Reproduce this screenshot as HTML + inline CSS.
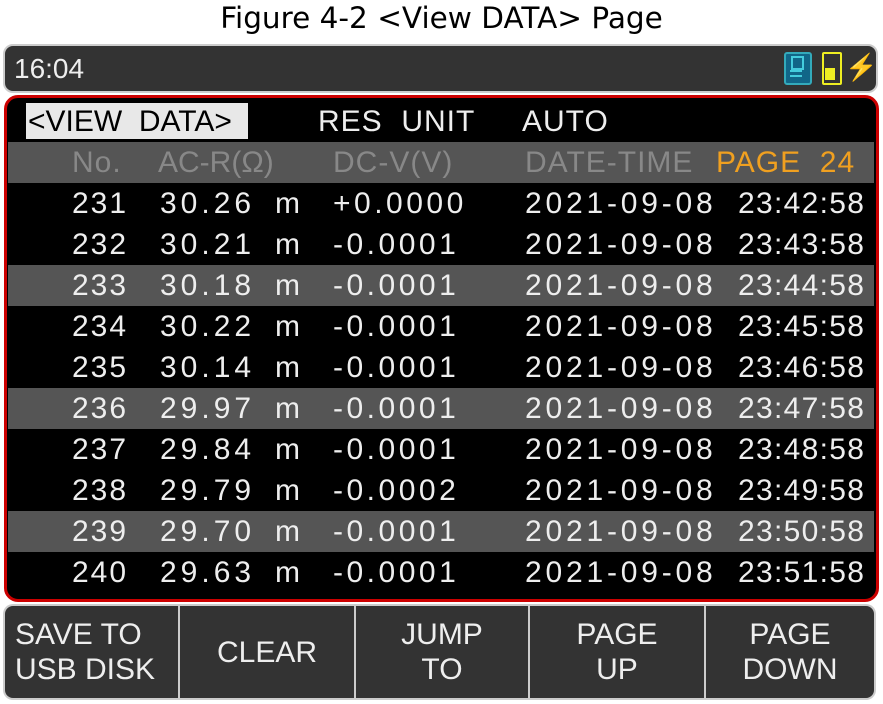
<!DOCTYPE html><html><head><style>
body{margin:0;width:883px;height:704px;background:#fff;position:relative;overflow:hidden;font-family:"Liberation Sans",sans-serif}
.a{position:absolute;white-space:pre}
.t{font-size:30px;color:#eee;letter-spacing:2px;line-height:41px}
.row{position:absolute;left:8px;width:866px;height:41px}
.btn{position:absolute;top:606px;height:92px;background:#333;color:#eee;font-size:30px;text-align:center;line-height:35px;display:flex;align-items:center;justify-content:center;letter-spacing:0px}
</style></head><body>
<div class="a" style="left:0;width:883px;top:0;text-align:center;font-size:29.5px;line-height:36px;color:#000;font-family:'DejaVu Sans',sans-serif">Figure 4-2 &lt;View DATA&gt; Page</div>
<div class="a" style="left:3px;top:44px;width:871px;height:45px;background:#333;border:2px solid #ccc;border-radius:10px"></div>
<div class="a" style="left:14px;top:50px;font-size:28px;color:#eee;line-height:38px">16:04</div>
<div class="a" style="left:784px;top:52px;width:24px;height:29px;border:2px solid #3ab;border-radius:3px;background:#168"></div>
<div class="a" style="left:791px;top:56px;width:9px;height:10px;border:2px solid #4cd"></div>
<div class="a" style="left:790px;top:70px;width:12px;height:2px;background:#4cd"></div>
<div class="a" style="left:790px;top:75px;width:12px;height:2px;background:#4cd"></div>
<div class="a" style="left:822px;top:52px;width:16px;height:29px;border:2px solid #ee2;border-radius:2px"></div>
<div class="a" style="left:825px;top:68px;width:10px;height:12px;background:#ee2"></div>
<div class="a" style="left:845px;top:50px;font-size:26px;color:#ee2;line-height:34px">⚡</div>
<div class="a" style="left:4px;top:95px;width:869px;height:501px;background:#000;border:3px solid #c00;border-radius:14px"></div>
<div class="a" style="left:26px;top:103px;width:222px;height:36px;background:#e8e8e8"></div>
<div class="a t" style="left:28px;top:101px;color:#000;letter-spacing:0">&lt;VIEW  DATA&gt;</div>
<div class="a t" style="left:318px;top:101px;letter-spacing:1px">RES  UNIT</div>
<div class="a t" style="left:522px;top:101px;letter-spacing:1px">AUTO</div>
<div class="row" style="top:142px;background:#555"></div>
<div class="a t" style="left:72px;top:142px;color:#888;letter-spacing:1px">No.</div>
<div class="a t" style="left:158px;top:142px;color:#888;letter-spacing:0">AC-R(Ω)</div>
<div class="a t" style="left:333px;top:142px;color:#888;letter-spacing:1px">DC-V(V)</div>
<div class="a t" style="left:525px;top:142px;color:#888;letter-spacing:1px">DATE-TIME</div>
<div class="a t" style="left:716px;top:142px;color:#f0a020;letter-spacing:1px">PAGE  24</div>
<div class="row" style="top:265px;background:#555"></div>
<div class="row" style="top:388px;background:#555"></div>
<div class="row" style="top:511px;background:#555"></div>
<div class="a t" style="left:72px;top:183px">231
232
233
234
235
236
237
238
239
240</div>
<div class="a t" style="left:160px;top:183px;letter-spacing:4px">30.26
30.21
30.18
30.22
30.14
29.97
29.84
29.79
29.70
29.63</div>
<div class="a t" style="left:275px;top:183px">m
m
m
m
m
m
m
m
m
m</div>
<div class="a t" style="left:333px;top:183px;letter-spacing:3.5px">+0.0000
-0.0001
-0.0001
-0.0001
-0.0001
-0.0001
-0.0001
-0.0002
-0.0001
-0.0001</div>
<div class="a t" style="left:525px;top:183px;letter-spacing:3.8px">2021-09-08
2021-09-08
2021-09-08
2021-09-08
2021-09-08
2021-09-08
2021-09-08
2021-09-08
2021-09-08
2021-09-08</div>
<div class="a t" style="left:738px;top:183px;letter-spacing:1.3px">23:42:58
23:43:58
23:44:58
23:45:58
23:46:58
23:47:58
23:48:58
23:49:58
23:50:58
23:51:58</div>
<div class="a" style="left:3px;top:604px;width:873px;height:96px;background:#ccc;border-radius:10px"></div>
<div class="btn" style="left:5px;width:173px;border-radius:8px 0 0 8px;justify-content:flex-start;text-align:left;padding-left:10px;box-sizing:border-box">SAVE  TO<br>USB  DISK</div>
<div class="btn" style="left:180px;width:174px">CLEAR</div>
<div class="btn" style="left:356px;width:172px">JUMP<br>TO</div>
<div class="btn" style="left:530px;width:174px">PAGE<br>UP</div>
<div class="btn" style="left:706px;width:168px;border-radius:0 8px 8px 0">PAGE<br>DOWN</div>
</body></html>
